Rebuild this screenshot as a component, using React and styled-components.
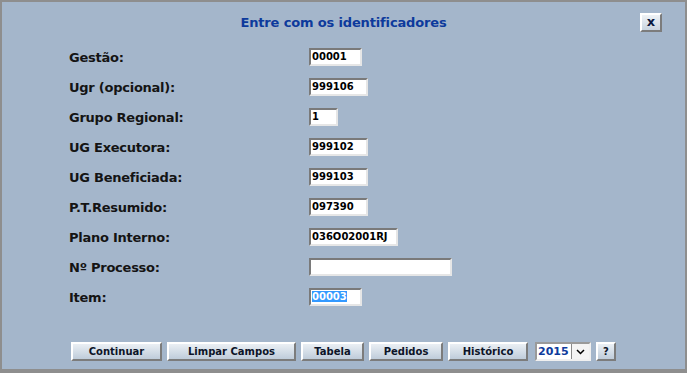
import React from "react";
import styled, { createGlobalStyle } from "styled-components";

const Global = createGlobalStyle`
  html, body { margin: 0; padding: 0; background: #a4b6cb; }
  * { box-sizing: border-box; }
`;

const Frame = styled.div`
  width: 687px;
  height: 373px;
  background: #a4b6cb;
  border-style: solid;
  border-color: #8e8e8e;
  border-width: 2px 2px 4px 2px;
  display: flex;
  flex-direction: column;
  font-family: "DejaVu Sans", Verdana, sans-serif;
`;

const Header = styled.div`
  display: grid;
  grid-template-columns: 1fr auto 1fr;
  align-items: center;
  height: 40px;
  padding: 0 23px 0 23px;
`;

const Title = styled.h1`
  grid-column: 2;
  margin: 0;
  font-size: 13px;
  font-weight: bold;
  color: #0d3a9c;
  letter-spacing: -0.15px;
`;

const CloseButton = styled.button`
  grid-column: 3;
  justify-self: end;
  width: 22px;
  height: 19px;
  padding: 0 0 2px;
  font-family: inherit;
  font-size: 13px;
  font-weight: bold;
  color: #0a1740;
  background: linear-gradient(#eef2f6, #c9d4df);
  border: 2px solid;
  border-color: #ffffff #7c7c7c #7c7c7c #ffffff;
  line-height: 1;
`;

const Form = styled.div`
  display: grid;
  grid-template-columns: 240px auto;
  row-gap: 12px;
  padding: 6px 0 0 67px;
  align-items: center;
`;

const Label = styled.label`
  font-size: 13px;
  font-weight: bold;
  color: #141414;
  letter-spacing: -0.25px;
`;

const TextBox = styled.div`
  width: ${(p) => p.$w}px;
  height: 18px;
  background: #ffffff;
  border: 2px solid;
  border-color: #7a7a7a #e6e6e6 #e6e6e6 #7a7a7a;
  padding: 0 1px;
  font-size: 10px;
  font-weight: bold;
  color: #000;
  line-height: 14px;
  white-space: nowrap;
  overflow: hidden;
`;

const Selected = styled.span`
  background: #3399ff;
  color: #ffffff;
`;

const Actions = styled.div`
  display: flex;
  align-items: center;
  gap: 5px;
  margin-top: 36px;
  padding-left: 69px;
`;

const Button = styled.button`
  width: ${(p) => p.$w}px;
  height: 19px;
  padding: 0;
  font-family: inherit;
  font-size: 10px;
  font-weight: bold;
  color: #0c1428;
  background: linear-gradient(#eaeff4, #bfccda);
  border: 2px solid;
  border-color: #ffffff #7c7c7c #7c7c7c #ffffff;
  line-height: 1;
`;

const Select = styled.div`
  display: flex;
  width: 56px;
  height: 19px;
  background: #ffffff;
  border: 2px solid;
  border-color: #9a9a9a #f0f0f0 #f0f0f0 #9a9a9a;
  margin-left: 2px;
`;

const SelectValue = styled.span`
  flex: 1;
  font-size: 11px;
  font-weight: bold;
  color: #0d3a9c;
  line-height: 15px;
  padding-left: 1px;
`;

const SelectArrow = styled.span`
  width: 18px;
  display: flex;
  align-items: center;
  justify-content: center;
  border-left: 1px solid #8a8a8a;
  background: #f4f4f4;
`;

const fields = [
  ["Gestão:", "00001", 53],
  ["Ugr (opcional):", "999106", 59],
  ["Grupo Regional:", "1", 29],
  ["UG Executora:", "999102", 59],
  ["UG Beneficiada:", "999103", 59],
  ["P.T.Resumido:", "097390", 59],
  ["Plano Interno:", "036O02001RJ", 89],
  ["Nº Processo:", "", 143],
  ["Item:", "00003", 53, true],
];

export default function App() {
  return (
    <>
      <Global />
      <Frame>
        <Header>
          <Title>Entre com os identificadores</Title>
          <CloseButton>x</CloseButton>
        </Header>
        <Form>
          {fields.map(([label, value, w, sel]) => (
            <React.Fragment key={label}>
              <Label>{label}</Label>
              <TextBox $w={w}>{sel ? <Selected>{value}</Selected> : value}</TextBox>
            </React.Fragment>
          ))}
        </Form>
        <Actions>
          <Button $w={91}>Continuar</Button>
          <Button $w={129}>Limpar Campos</Button>
          <Button $w={63}>Tabela</Button>
          <Button $w={74}>Pedidos</Button>
          <Button $w={80}>Histórico</Button>
          <Select>
            <SelectValue>2015</SelectValue>
            <SelectArrow>
              <svg width="9" height="6" viewBox="0 0 9 6">
                <path d="M1 1 L4.5 4.5 L8 1" stroke="#000" strokeWidth="1.5" fill="none" />
              </svg>
            </SelectArrow>
          </Select>
          <Button $w={20}>?</Button>
        </Actions>
      </Frame>
    </>
  );
}
